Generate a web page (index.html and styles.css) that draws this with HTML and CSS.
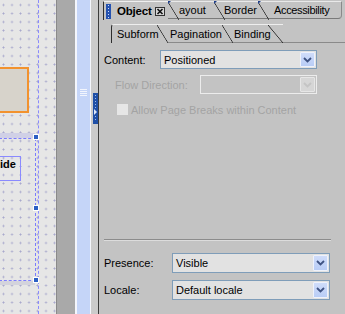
FILE: index.html
```html
<!DOCTYPE html>
<html>
<head>
<meta charset="utf-8">
<link rel="stylesheet" href="styles.css">
</head>
<body>
<div class="canvas">
  <div class="vguide"></div>
  <div class="obox"></div>
  <div class="selband"></div>
  <div class="selrect"></div>
  <div class="band2"></div>
  <div class="idebox">ide</div>
  <div class="handle h1"></div>
  <div class="handle h2"></div>
  <div class="handle h3"></div>
</div>
<div class="split"></div>
<div class="sbar"></div>
<div class="wline2"></div>
<div class="bluebar"><div class="bgrip"></div></div>
<div class="wline1"></div>
<div class="gcol">
  <div class="collapse">
    <svg width="5" height="31" viewBox="0 0 5 31"><g fill="#9fb8ea"><rect x="2" y="2" width="1" height="1"/><rect x="2" y="5" width="1" height="1"/><rect x="2" y="8" width="1" height="1"/><rect x="2" y="11" width="1" height="1"/><rect x="2" y="14" width="1" height="1"/><rect x="2" y="23" width="1" height="1"/><rect x="2" y="26" width="1" height="1"/></g><path d="M1 16 L4 19 L1 22 Z" fill="#dfe8fa"/></svg>
  </div>
</div>
<div class="panel">
  <div class="tabs1">
    <div class="tab obj">
      <span class="grip"></span>
      <b class="objtext">Object</b>
      <span class="close"><svg width="8" height="7" viewBox="0 0 8 7"><path d="M1.5 1 L6.5 6 M6.5 1 L1.5 6" stroke="#111" stroke-width="1.6"/></svg></span>
    </div>
    <div class="tab t1 tlay">ayout</div>
    <div class="tab t1 tbor">Border</div>
    <div class="tab t1 tacc">Accessibility</div>
    <div class="tabfill"></div>
  </div>
  <div class="tabs2">
    <div class="st sub">Subform</div>
    <div class="st pag">Pagination</div>
    <div class="st bin">Binding</div>
    <div class="st2fill"></div>
  </div>
  <div class="body">
    <div class="row r-content">
      <span class="lbl w56">Content:</span>
      <div class="sel w157"><span class="val">Positioned</span><span class="btn"><svg width="9" height="6" viewBox="0 0 9 6"><path d="M1 1 L4.5 4.5 L8 1" fill="none" stroke="#3f5383" stroke-width="1.8"/></svg></span></div>
    </div>
    <div class="row r-flow">
      <span class="lbl dis w85">Flow Direction:</span>
      <div class="sel dsel w117"><span class="val"></span><span class="btn"><svg width="9" height="6" viewBox="0 0 9 6"><path d="M1 1 L4.5 4.5 L8 1" fill="none" stroke="#c4c4c4" stroke-width="1.8"/></svg></span></div>
    </div>
    <div class="row r-check">
      <span class="cbox"></span>
      <span class="lbl dis">Allow Page Breaks within Content</span>
    </div>
    <div class="sep"></div>
    <div class="row r-pres">
      <span class="lbl w68">Presence:</span>
      <div class="sel w158"><span class="val">Visible</span><span class="btn"><svg width="9" height="6" viewBox="0 0 9 6"><path d="M1 1 L4.5 4.5 L8 1" fill="none" stroke="#3f5383" stroke-width="1.8"/></svg></span></div>
    </div>
    <div class="row r-loc">
      <span class="lbl w68">Locale:</span>
      <div class="sel w158"><span class="val">Default locale</span><span class="btn"><svg width="9" height="6" viewBox="0 0 9 6"><path d="M1 1 L4.5 4.5 L8 1" fill="none" stroke="#3f5383" stroke-width="1.8"/></svg></span></div>
    </div>
  </div>
</div>
</body>
</html>
```
FILE: styles.css
```css
* { box-sizing: border-box; }
body {
  margin: 0;
  width: 345px;
  height: 314px;
  overflow: hidden;
  display: flex;
  font-family: "Liberation Sans", Arial, sans-serif;
  font-size: 11px;
  color: #000;
  background: #c3c3c3;
}

/* design canvas */
.canvas {
  width: 56px;
  height: 314px;
  position: relative;
  overflow: hidden;
  background-color: #e6e6e6;
  background-image: radial-gradient(circle, #a9a9cc 0.7px, transparent 1.3px);
  background-size: 8.5px 8.5px;
  background-position: -0.75px 0.75px;
}
.vguide {
  position: absolute;
  left: 38px; top: 0; bottom: 0;
  border-left: 1px dashed #8a8aff;
}
.obox {
  position: absolute;
  left: -2px; top: 67px;
  width: 31px; height: 46px;
  border: 2px solid #f2922e;
  background: #d7d3cb;
}
.selband {
  position: absolute;
  left: 0; top: 133px;
  width: 35px; height: 5px;
  background: #d0d0e6;
}
.selrect {
  position: absolute;
  left: -1px; top: 138px;
  width: 37px; height: 143px;
  border: 1px dashed #7b7bff;
}
.band2 {
  position: absolute;
  left: 0; top: 281px;
  width: 35px; height: 4px;
  background: #d3d3dc;
}
.idebox {
  position: absolute;
  left: -1px; top: 156px;
  width: 22px; height: 25px;
  border: 1px solid #8a8aff;
  font-weight: bold;
  padding: 1px 0 0 0;
  line-height: 12px;
}
.handle {
  position: absolute;
  left: 33px;
  width: 6px; height: 6px;
  background: #2c5fc4;
  border: 1px solid #fff;
}
.h1 { top: 134px; }
.h2 { top: 205px; }
.h3 { top: 277px; }

/* splitter strips */
.split { width: 1px; background: #8a8a8a; }
.sbar { width: 18px; background: #a9a9a9; }
.wline2 { width: 2px; background: #f4f6fc; }
.bluebar { width: 13px; background: #c5d5f8; position: relative; }
.bgrip {
  position: absolute;
  left: 3px; top: 89px;
  width: 7px; height: 8px;
  background: repeating-linear-gradient(to bottom, #f2f5fd 0 1px, transparent 1px 2px);
}
.wline1 { width: 1px; background: #f4f6fc; }
.gcol { width: 7px; background: #cbcbcb; position: relative; }
.collapse {
  position: absolute;
  left: 2px; top: 93px;
  width: 5px; height: 31px;
  background: #1f4fa6;
}
.collapse svg { display: block; }

/* panel */
.panel {
  flex: 1;
  display: flex;
  flex-direction: column;
  border-left: 1px solid #3c3c3c;
  min-width: 0;
}
.tabs1 {
  height: 19px;
  display: flex;
  padding-left: 4px;
  padding-top: 1px;
}
.tab {
  height: 18px;
  display: flex;
  align-items: center;
  position: relative;
  border-bottom: 1px solid #7a7a7a;
  white-space: nowrap;
}
.obj {
  width: 65px;
  border-left: 1px solid #2e2e2e;
  border-top: 1px solid #efefef;
  border-bottom: none;
  height: 19px;
  padding-left: 2px;
}
.grip {
  width: 5px; height: 15px;
  background: #2552b0;
  background-image: radial-gradient(circle, #cfdcf7 0.6px, transparent 0.9px);
  background-size: 5px 3px;
  background-position: 0 0;
}
.objtext { margin-left: 6px; font-size: 11.5px; letter-spacing: -0.2px; }
.close {
  margin-left: 3px;
  width: 10px; height: 9px;
  border: 1px solid #333;
  background: #d6d6d6;
  display: flex; align-items: center; justify-content: center;
}
.close svg { display: block; }
.t1 {
  border-top: 1px solid #e9e9e9;
}
.t1::before {
  content: "";
  position: absolute;
  left: 0; top: 0;
  width: 11px; height: 18px;
  background: linear-gradient(to top right, transparent calc(50% - 0.7px), #2a2a2a 50%, transparent calc(50% + 0.7px));
}
.t1::after {
  content: "";
  position: absolute;
  left: 0; top: -1px;
  width: 0; height: 0;
  border-top: 3px solid #1f3f8a;
  border-right: 3px solid transparent;
}
.tlay { width: 46px; padding-left: 11px; }
.tbor { width: 44px; padding-left: 10px; }
.tacc { width: 84px; padding-left: 16px; letter-spacing: -0.35px; border-right: 1px solid #8a8a8a; border-bottom-right-radius: 4px; }
.tabfill { flex: 1; }

.tabs2 {
  margin-top: 5px;
  height: 19px;
  display: flex;
  padding-left: 12px;
}
.st {
  height: 19px;
  display: flex;
  align-items: center;
  position: relative;
  border-top: 1px solid #eeeeee;
  border-bottom: 1px solid #8a8a8a;
  white-space: nowrap;
}
.st::after {
  content: "";
  position: absolute;
  right: 0; top: 0;
  width: 11px; height: 18px;
  background: linear-gradient(to top right, transparent calc(50% - 0.7px), #2a2a2a 50%, transparent calc(50% + 0.7px));
}
.sub {
  width: 57px;
  padding-left: 5px;
  border-left: 1px solid #2e2e2e;
  border-top-left-radius: 3px;
  border-bottom: none;
}
.pag { width: 65px; padding-left: 2px; }
.bin { width: 50px; padding-left: 1px; }
.bin::after { width: 15px; }
.st2fill { flex: 1; border-bottom: 1px solid #8a8a8a; height: 19px; }

.body {
  flex: 1;
  display: flex;
  flex-direction: column;
  padding-left: 5px;
}
.row { display: flex; align-items: center; }
.lbl { white-space: nowrap; }
.dis { color: #a3a3a3; }
.w56 { width: 56px; }
.w85 { width: 85px; }
.w68 { width: 68px; }
.w157 { width: 157px; }
.w117 { width: 117px; }
.w158 { width: 158px; }
.r-content { margin-top: 7px; height: 19px; }
.r-flow { margin-top: 6px; height: 19px; padding-left: 11px; }
.r-check { margin-top: 10px; height: 11px; padding-left: 13px; }
.cbox {
  width: 11px; height: 11px;
  background: #e6e6e6;
  margin-right: 3px;
}
.sep {
  margin-top: 124px;
  margin-right: 14px;
  height: 2px;
  border-top: 1px solid #8c8c8c;
  border-bottom: 1px solid #dcdcdc;
}
.r-pres { margin-top: 12px; height: 20px; }
.r-loc { margin-top: 7px; height: 20px; }

.sel {
  height: 100%;
  display: flex;
  align-items: center;
  border: 1px solid #7f9db9;
  background: #e2e2e2;
}
.sel .val { flex: 1; padding-left: 3px; white-space: nowrap; overflow: hidden; }
.sel .btn {
  width: 15px;
  height: calc(100% - 2px);
  margin-right: 1px;
  background: linear-gradient(#cfdcfa, #b9cdf6);
  border: 1px solid #eef2fc;
  border-radius: 1px;
  display: flex; align-items: center; justify-content: center;
}
.sel .btn svg { display: block; }
.dsel {
  border-color: #ececec;
  background: #c3c3c3;
}
.dsel .btn {
  background: #d6d6d6;
  border-color: #e6e6e6;
}
```
